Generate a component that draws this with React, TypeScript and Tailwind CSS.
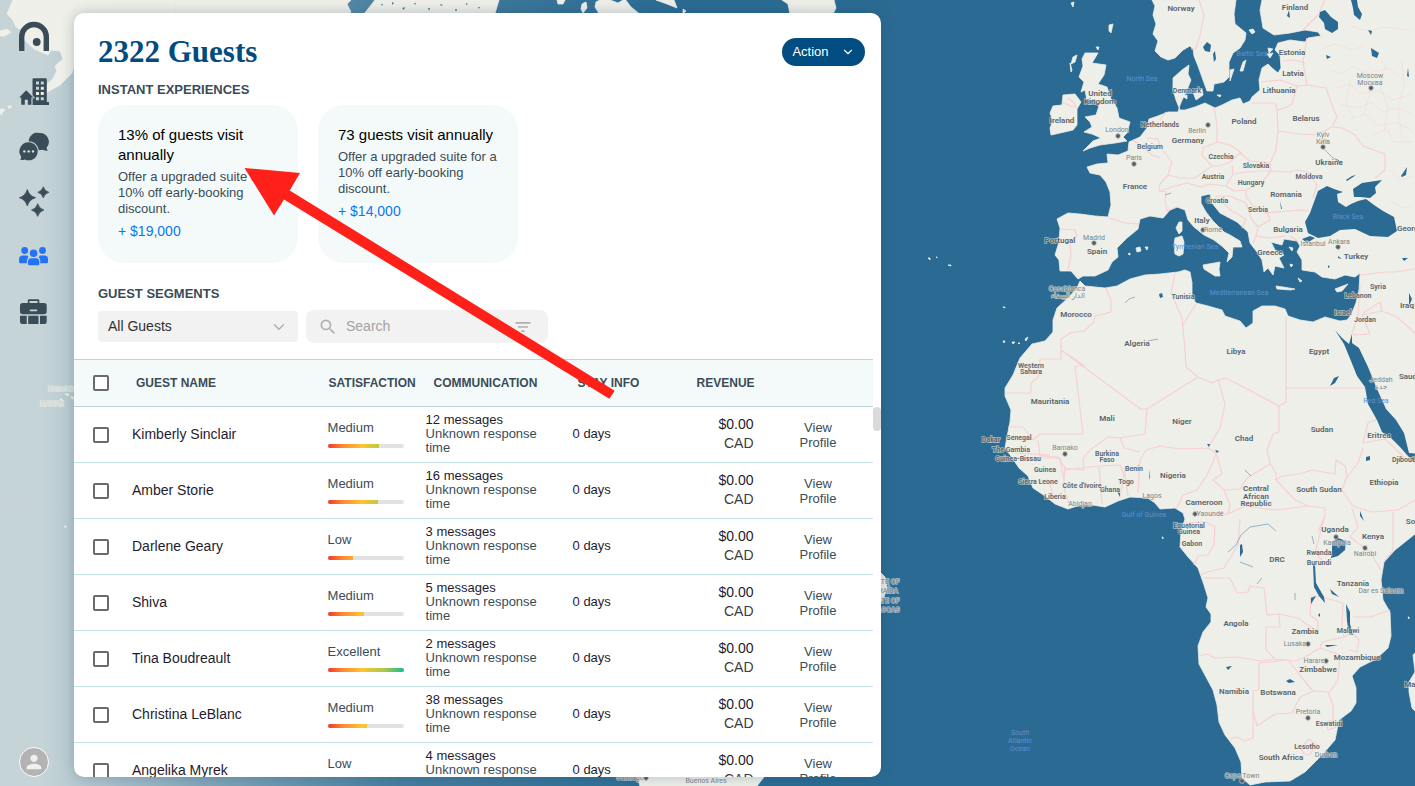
import React from "react";
import { ChevronDown } from "lucide-react";
import { MdSearch, MdFilterList, MdPerson } from "react-icons/md";

/* ---------- Map ---------- */

type Label = [string, number, number, number?];

const countries: Label[] = [
  ["Norway", 1181, 11, 8], ["Finland", 1295, 10, 8], ["Estonia", 1292, 55, 8], ["Latvia", 1293, 76, 8],
  ["Lithuania", 1279, 93, 8], ["Belarus", 1306, 121, 8], ["Poland", 1244, 124, 8], ["Germany", 1188, 143, 8],
  ["United", 1100, 96, 8], ["Kingdom", 1100, 104, 8], ["Ireland", 1062, 123, 8], ["Denmark", 1187, 93, 7],
  ["Netherlands", 1160, 127, 7], ["Belgium", 1150, 149, 7], ["Czechia", 1221, 159, 7], ["Slovakia", 1256, 168, 7],
  ["Austria", 1213, 179, 7], ["Hungary", 1251, 185, 7], ["Moldova", 1309, 179, 7], ["Ukraine", 1329, 165, 8],
  ["Romania", 1286, 197, 8], ["France", 1135, 189, 8], ["Croatia", 1217, 203, 7], ["Serbia", 1258, 212, 7],
  ["Italy", 1202, 223, 8], ["Bulgaria", 1288, 232, 8], ["Greece", 1270, 255, 8], ["Turkey", 1356, 259, 8],
  ["Portugal", 1060, 243, 8], ["Spain", 1097, 254, 8], ["Georgia", 1411, 231, 8], ["Morocco", 1076, 317, 8],
  ["Tunisia", 1183, 299, 7], ["Algeria", 1137, 346, 8], ["Libya", 1236, 354, 8], ["Egypt", 1319, 354, 8],
  ["Syria", 1378, 289, 7], ["Lebanon", 1358, 298, 7], ["Israel", 1343, 315, 7], ["Jordan", 1365, 322, 7],
  ["Iraq", 1407, 308, 8], ["Saudi", 1409, 379, 8], ["Western", 1031, 368, 7], ["Sahara", 1031, 374, 7],
  ["Mauritania", 1050, 404, 8], ["Mali", 1107, 421, 8], ["Niger", 1182, 424, 8], ["Chad", 1244, 441, 8],
  ["Sudan", 1322, 432, 8], ["Eritrea", 1379, 438, 8], ["Djibouti", 1404, 462, 7], ["Senegal", 1019, 440, 7],
  ["The Gambia", 1011, 452, 7], ["Guinea-Bissau", 1018, 461, 7], ["Guinea", 1045, 472, 7],
  ["Sierra Leone", 1038, 484, 7], ["Liberia", 1055, 499, 7], ["Burkina", 1107, 456, 7], ["Faso", 1107, 462, 7],
  ["Benin", 1134, 471, 7], ["Togo", 1126, 484, 7], ["Ghana", 1110, 492, 7], ["Côte d'Ivoire", 1082, 488, 7],
  ["Nigeria", 1173, 478, 8], ["Cameroon", 1204, 505, 8], ["Central", 1256, 491, 8], ["African", 1256, 499, 8],
  ["Republic", 1256, 506, 8], ["South Sudan", 1319, 492, 8], ["Ethiopia", 1384, 485, 8], ["Equatorial", 1189, 528, 7],
  ["Guinea", 1189, 534, 7], ["Gabon", 1192, 546, 7], ["DRC", 1277, 562, 8], ["Uganda", 1335, 532, 8],
  ["Kenya", 1373, 539, 8], ["Rwanda", 1319, 555, 7], ["Burundi", 1319, 565, 7], ["Tanzania", 1353, 586, 8],
  ["Angola", 1236, 626, 8], ["Zambia", 1305, 634, 8], ["Malawi", 1348, 633, 7], ["Mozambique", 1357, 660, 8],
  ["Zimbabwe", 1318, 672, 8], ["Namibia", 1234, 694, 8], ["Botswana", 1278, 695, 8], ["Eswatini", 1329, 726, 7],
  ["Lesotho", 1307, 749, 7], ["South Africa", 1281, 760, 8], ["Ma", 1410, 687, 8], ["Som", 1414, 524, 8],
  ["Dakar", 991, 442, 7],
];

const cities: Label[] = [
  ["London", 1117, 132], ["Berlin", 1197, 133], ["Paris", 1134, 160], ["Madrid", 1094, 240], ["Rome", 1213, 232],
  ["Moscow", 1370, 78], ["Москва", 1370, 85], ["Kyiv", 1323, 137], ["Київ", 1323, 144], ["Istanbul", 1313, 246],
  ["Ankara", 1339, 244], ["Casablanca", 1067, 291], ["الدار البيضاء", 1068, 298], ["Jeddah", 1381, 382],
  ["جدة", 1381, 389], ["Bamako", 1065, 450], ["Abidjan", 1080, 506], ["Lagos", 1152, 498], ["Yaoundé", 1210, 516],
  ["Kampala", 1337, 545], ["Nairobi", 1365, 556], ["Dar es Salaam", 1381, 593], ["Lusaka", 1295, 646],
  ["Harare", 1314, 663], ["Pretoria", 1308, 714], ["Durban", 1326, 757], ["Cape Town", 1242, 778],
  ["Santiago", 630, 780], ["Buenos Aires", 706, 783], ["Honolulu", 62, 391], ["HAWAII", 52, 406],
  ["STATE OF", 884, 584], ["PARAÍBA", 884, 593], ["STATE OF", 884, 603], ["ALAGOAS", 884, 612],
];

const seas: Label[] = [
  ["North Sea", 1142, 81], ["Baltic Sea", 1252, 56], ["Black Sea", 1348, 219], ["Tyrrhenian Sea", 1195, 249],
  ["Mediterranean Sea", 1239, 295], ["Red Sea", 1376, 403], ["Gulf of Guinea", 1144, 517],
];

const dots: [number, number][] = [
  [1118, 136], [1208, 125], [1134, 164], [1094, 243], [1203, 230], [1371, 88], [1323, 147], [1338, 247],
  [1065, 454], [1195, 514], [1336, 537], [1365, 548], [1308, 644], [1326, 661], [1308, 718], [1242, 781], [646, 778],
];

const land = [
  // Scandinavia
  "M1152 0L1155 6 1153 15 1156 24 1153 34 1158 41 1155 51 1161 57 1168 60 1175 58 1183 50 1190 46 1193 49 1194 56 1198 66 1203 80 1207 91 1213 91 1214 84 1224 82 1229 77 1229 62 1233 53 1240 48 1245 40 1246 33 1240 28 1235 24 1234 14 1236 0Z",
  // Eurasia and Africa
  "M1262 0L1260 10 1263 28 1274 35 1290 33 1305 30 1318 32 1321 36 1308 38 1305 42 1290 40 1278 43 1275 50 1280 55 1281 68 1278 73 1272 68 1268 64 1262 68 1259 80 1260 90 1252 97 1250 101 1243 104 1240 98 1232 100 1222 105 1215 108 1205 103 1195 107 1185 110 1180 110 1176 100 1173 90 1173 78 1182 70 1189 65 1188 74 1191 80 1187 90 1183 98 1180 105 1178 112 1168 112 1158 116 1149 119 1147 128 1140 137 1129 142 1128 151 1118 155 1107 154 1108 163 1097 164 1087 167 1090 173 1100 175 1106 182 1110 192 1111 205 1108 217 1095 216 1080 214 1068 213 1057 219 1060 228 1059 242 1055 255 1059 260 1060 271 1071 271 1078 279 1083 276 1095 276 1108 270 1112 262 1118 257 1117 248 1127 238 1138 229 1140 219 1150 216 1163 218 1170 210 1177 207 1185 210 1188 220 1194 227 1204 235 1214 240 1223 247 1229 253 1227 262 1232 257 1233 247 1242 247 1240 241 1230 235 1224 232 1213 221 1206 212 1201 203 1201 196 1210 194 1212 203 1220 213 1237 222 1248 232 1250 243 1257 252 1262 260 1264 272 1268 268 1273 275 1275 266 1284 268 1279 258 1284 255 1275 250 1271 242 1282 245 1284 239 1297 241 1300 246 1297 252 1302 260 1302 270 1315 272 1322 277 1335 279 1345 275 1355 277 1360 273 1359 290 1356 303 1351 315 1347 320 1340 321 1325 317 1313 322 1300 320 1288 316 1285 309 1275 306 1262 306 1253 311 1253 323 1246 328 1240 321 1225 316 1222 310 1208 306 1196 303 1192 297 1192 283 1190 272 1185 270 1178 272 1160 274 1145 275 1130 279 1117 286 1105 288 1085 286 1080 281 1077 288 1068 298 1057 308 1053 320 1053 332 1045 341 1032 344 1020 358 1013 375 1005 388 1005 396 1011 410 1010 422 1007 437 1005 448 1013 459 1019 468 1028 476 1033 488 1045 496 1055 504 1068 509 1080 505 1092 505 1105 507 1118 501 1130 497 1148 498 1155 503 1160 509 1175 508 1183 513 1185 519 1181 532 1180 547 1188 557 1198 568 1204 585 1208 598 1206 607 1211 614 1211 622 1203 632 1198 646 1199 664 1213 690 1217 705 1219 722 1225 735 1235 748 1241 762 1242 778 1250 785 1265 782 1290 781 1305 772 1322 755 1335 740 1339 720 1351 711 1356 703 1356 688 1352 676 1360 667 1376 659 1388 648 1391 636 1390 612 1383 600 1381 580 1384 562 1395 550 1420 530V0Z",
  // British Isles
  "M1085 53L1098 53 1092 63 1106 65 1104 75 1098 84 1107 87 1111 99 1117 108 1119 118 1130 122 1127 133 1123 137 1127 141 1115 143 1100 145 1090 148 1083 151 1093 141 1101 138 1092 134 1084 132 1092 127 1090 122 1085 117 1096 115 1099 106 1095 99 1087 100 1085 90 1081 92 1084 82 1079 77 1083 66 1082 59Z",
  "M1063 95L1075 94 1081 102 1077 109 1077 125 1073 130 1060 133 1051 135 1050 128 1053 121 1050 113 1053 106 1062 105Z",
  "M1073 57l4-2-2 7-4 2zM1070 63l2 7-1 2zM1109 25l4-1-2 9-2-2zM1071 3l3-1-1 5zM1096 47l3 0-1 3z",
  // Islands
  "M1243 62l3-2-3 11-3 0zM1230 70l4-1-4 12zM1193 92l9-3 1 6-7 5zM1182 96l5-1 0 4zM1268 48l5 1-4 4zM1267 54l6-1-3 5zM1249 30l4-1 2 3-3 2zM1217 95l4 0-1 2z",
  "M1179 222l3 0 0 9-3 3-3-6zM1175 238l7-2 2 6-1 12-4 2-4-2-1-9zM1203 265l17-3-1 7 1 7-5 0-11-7zM1136 248l4-1 1 4-4 1zM1145 247l3 0-1 3zM1128 254l2-1 0 2z",
  "M1276 286l7 1 12 2-4 1-14-1zM1335 289l13-5-6 7-5 1zM1298 278l4 3-2 1zM1289 247l4 1-1 3zM1290 264l3 1-2 2z",
  "M1003 341l2 0-1 2zM1012 342l3 0-2 2zM1018 343l2 0-1 1zM1025 339l3-2-2 4zM1003 307l2 0 0 1zM928 258l2 0 0 2zM936 257l1 0 0 1zM948 265l3 0 0 1zM1162 537l1 0 0 2z",
  "M1420 648L1413 655 1415 672 1409 682 1409 692 1412 708 1420 716Z",
  // South America
  "M881 573L885 577 887 588 884 597 881 602ZM636 772L640 786 757 786 768 772Z",
  // North America and Greenland
  "M13 0L7 14 13 20 16 27 22 30 19 35 34 49 48 55 51 50 60 51 63 59 55 66 57 71 52 80 37 92 22 101 20 104 42 95 60 85 72 73 76 60 230 60 345 16 351 12 347 4 351 0ZM0 31l7-2 4 3-6 4-5 0zM0 109l5 0-4 6zM8 106l4 0-3 3z",
  "M375 0L364 14 361 30 490 30 499 0ZM557 0l8 0-2 4-5 0zM582 4l4-2 1 6-4 5-2-4zM596 2l4-2 10 0 8 3 7-4 6 8 10 8H600l-5-8zM656 0h18l3 8-10-4zM683 9l3 2-3 3zM782 0l6 4 2 10h43l3-6-2-8z",
  "M60 399l2 0 0 2zM65 394l4 0-1 2zM71 396l3 2-2 1zM64 526l2 0 0 2zM1408 617l1 0 0 2z",
];

const water = [
  // Black Sea, Sea of Azov
  "M1318 191L1327 186 1334 189 1343 192 1337 194 1338 202 1346 207 1351 204 1358 201 1366 199 1374 205 1383 211 1394 217 1397 231 1388 237 1370 236 1355 229 1340 230 1330 236 1318 238 1308 233 1305 222 1310 213Z",
  "M1353 189L1362 183 1382 180 1375 187 1376 193 1370 198 1360 197 1354 197Z",
  "M1302 239l8-3 5 2-8 5z",
  // Red Sea
  "M1335 330L1344 344 1351 361 1357 376 1365 387 1368 404 1377 420 1382 432 1392 439 1400 447 1408 456 1420 468V454L1409 453 1404 433 1396 420 1386 409 1377 389 1368 367 1359 348 1352 343 1352 334 1349 344 1342 338Z",
  // Lakes
  "M1320 12l5-2 6 7 7 5 0 7-6 4-7-4-1-6-5-6zM1351 0l6 0 1 7 4 7-2 6-6-5-1-7zM1371 48l8 5-2 5-5-2zM1203 47l4-5 4 3-1 7-5-1zM1213 54l2-3 1 8-2 3zM1326 55l5 2-4 2zM1368 30l4 1-1 4zM1289 10l1 8-3-2zM1408 68l1 9-2-1zM1401 176l6-9-1 8-4 2z",
  "M1332 542l6-4 8 3-1 9-7 6-7 2 1-8zM1313 565l2 0 1 18 8 14 1 6-6-7-5-9zM1330 589l9 8-7-3zM1346 604l4 8 0 12 3 11-4-1-2-13zM1311 598l5-2-5 8zM1226 667l6-1-4 4zM1286 681l4-2 5 3-6 1zM1325 645l13 0-11 2zM1318 615l2-2 0 4zM1360 511l4 10-4-5zM1366 457l4-1 0 4-4 1zM1330 386l4-8 5-2-4 7-5 3zM1159 294l3-1 1 4-3 1zM1149 469l1 11-1-3zM1117 491l3 2 0 4zM1207 444l3 0-1 3zM1215 450l4 1-2 2zM1334 441l1 9zM1240 545l2-1 1 8-3 5zM1409 293l3 6-3 7z",
  "M1346 180l6-4 4-1-9 6zM1335 158l8 5-2 1zM1280 201l2 8-1 0zM1338 256l4 3-4-1zM1328 265l2 2-2 1zM1402 258l6 0-4 3z",
];

const rivers = "M1228 552L1236 545 1241 535 1250 527 1268 524 1276 531M1240 562L1253 567M1323 148L1332 157 1341 164M1165 195l6-2M1125 303l4-4 6-2M1148 341l10-2M1245 470l6 6M1262 578l-5 6M1295 593l0 7M1312 536l2 8";

const borders = [
  "M1199 0L1204 15 1200 35 1196 48 1191 49M1325 0L1318 15 1303 30M1307 38L1305 50 1303 62 1307 85 1326 88 1332 105 1337 117 1332 127 1342 128 1355 135 1363 146 1385 154 1385 170 1375 178M1283 61L1295 60 1305 63M1261 82L1280 80 1297 86 1307 85M1297 86L1292 104 1285 108 1277 110 1275 103 1252 103M1277 110L1278 131 1300 134 1318 135 1331 127M1278 131L1276 150 1270 163 1271 171 1290 172 1297 170 1308 172 1317 185 1313 198M1214 107L1217 125 1217 142 1203 148 1202 155 1212 166 1220 166 1230 162 1240 153 1250 161 1270 163M1217 142L1230 145 1242 153M1147 138L1158 139 1160 147 1172 162 1168 175 1180 178 1195 178 1212 166M1133 140L1143 147 1152 155 1160 158M1168 175L1160 184 1159 191 1166 192 1165 200 1167 211 1177 207M1160 191L1175 186 1187 183 1200 187 1210 184 1226 186 1233 174 1232 165M1233 174L1246 172 1262 171 1271 171M1226 186L1234 191 1246 190 1262 182 1271 171M1246 190L1246 196 1252 205 1265 213 1300 210 1309 211M1213 203L1217 196 1230 196 1246 203 1252 220 1258 227 1270 220 1268 213M1220 200L1232 211 1246 219 1242 228M1258 227L1256 236 1270 238 1285 236M1253 243L1256 236M1109 218L1125 223 1139 224M1060 229L1075 230 1077 236 1070 243 1071 255 1068 270M1166 112L1160 120M1298 241L1290 236",
  "M1106 288L1111 300 1111 312 1095 316 1094 322 1084 331 1070 333 1061 339 1061 359 1040 359 1038 378 1031 383 1031 393 1005 393M1061 350L1127 399 1141 409 1147 409 1198 377M1085 366L1075 366 1083 434 1040 434 1033 440 1023 427 1008 427M1085 366L1061 350M1147 409L1145 434 1120 438 1108 437 1090 450 1083 459 1084 470 1065 468 1058 457 1040 456 1038 440M1175 274L1171 293 1182 318 1185 350 1186 367 1198 377 1212 383 1218 380 1226 378 1279 406M1196 304L1186 320 1182 327M1286 317L1286 402 1279 406 1279 432 1273 434 1267 450 1270 463 1276 473 1276 480M1286 388L1365 388M1218 380L1225 404 1220 428 1208 448 1216 453 1222 474 1213 480 1224 490 1240 489 1247 478 1270 464M1208 448L1180 449 1160 446 1146 450 1140 460 1138 493M1120 438L1124 448 1140 452M1100 466L1120 465 1124 475 1120 497M1099 466L1102 504M1124 467L1128 496M1065 468L1064 480 1065 492 1070 506M1064 470L1098 466M1014 453L1050 455M1016 458L1060 458 1064 480M1030 482L1048 480 1053 494M1177 508L1183 495 1197 490 1207 475 1213 462 1216 453M1276 480L1282 476 1300 474 1312 470 1335 474 1336 460 1345 466 1347 476 1342 490 1352 505 1358 508 1372 512 1398 510 1415 500M1276 480L1295 500 1308 506 1325 508 1325 515 1318 532M1363 448L1358 463 1345 480M1363 443L1385 439 1405 458M1363 443L1368 423 1378 419M1224 490L1230 505 1228 514 1245 506 1275 510 1308 506M1352 508L1358 527 1350 537 1370 552 1381 570M1325 515L1317 545 1315 552 1322 560M1384 562L1393 550 1393 512",
  "M1183 523L1206 522 1215 527 1214 545 1208 555 1198 556 1194 565M1206 515L1228 514M1240 519L1238 545 1224 568 1207 572 1201 575M1204 578L1230 578 1237 593 1248 592 1250 586 1264 588 1267 615 1279 614 1280 627 1266 627 1266 650 1275 659 1260 661 1237 657 1215 658 1208 654 1198 656M1279 614L1298 618 1318 632 1318 621 1310 615 1311 597 1325 596M1325 598L1343 603 1342 625 1344 637 1322 642 1320 648 1305 657 1295 661 1275 659M1353 617L1370 617 1390 610M1259 663L1286 660 1289 661 1302 678 1313 691 1330 692 1338 680 1340 655 1320 648M1259 663L1259 690 1253 691 1253 738 1245 741 1236 737 1230 739M1253 711L1257 726 1275 714 1292 713 1300 697 1314 691M1328 692L1333 705 1333 720 1326 722 1328 730 1337 727M1301 748L1309 739 1316 744 1310 755 1304 754ZM1344 637L1352 633 1359 640 1357 652 1350 650M1360 285L1358 315 1352 334M1360 275L1385 272 1395 272 1415 269M1363 313L1380 302 1382 311 1397 317 1415 333M1382 311L1362 315 1370 334 1353 335M1062 103l5 1 4 3 5 0-3-5-5-4",
];

function WorldMap() {
  return (
    <svg
      className="absolute inset-0 h-full w-full"
      viewBox="0 0 1415 786"
      preserveAspectRatio="xMidYMid slice"
      role="img"
      aria-label="World map"
      fontFamily="Roboto, 'Noto Sans', sans-serif"
      textAnchor="middle"
    >
      <rect width="1415" height="786" fill="#2b6b93" />
      <g fill="#eeefe8" stroke="#eeefe8" strokeWidth="0.8" strokeLinejoin="round">
        {land.map((d, i) => <path key={i} d={d} />)}
      </g>
      <g fill="none" stroke="#f8cfd2" strokeWidth="1.2" strokeLinejoin="round">
        {borders.map((d, i) => <path key={i} d={d} />)}
        <path
          strokeWidth="0.7"
          opacity="0.6"
          d="M1320 50l15-6 18 6 12-5M1330 70l12 4 10-8 14 8 22-6 12 8M1336 88l14-4 10 10 18-4 14 10 20-6M1340 104l18 4 14-6 10 10 16-4 14 6M1350 120l16-6 12 12 18-4 18 10M1372 136l14-8 8 14 20 0M1350 84l-4 20 8 14M1366 70l4 24-6 20M1386 62l-6 24 8 22-4 24M1402 60l2 26-6 22 4 30M1390 170l10 10 14-4M1390 200l12 8 12-2M1350 25l16 6 20-4 28 4M175 0v14"
        />
      </g>
      <g fill="#2b6b93">
        {water.map((d, i) => <path key={i} d={d} />)}
        <path d="M381 4l2 0-1 2zM392 2l2 1-2 2zM402 8l3-1-1 3zM414 3l2 0-1 2zM428 8l2 0-1 3zM440 4l3 1-2 1zM455 9l2 0-1 3zM466 3l2 1-2 1zM478 7l2 0-1 2z" />
      </g>
      <path d={rivers} fill="none" stroke="#78a5bd" strokeWidth="0.8" />
      <g fill="#575b5e" stroke="#c5c8c6" strokeWidth="0.8">
        {dots.map(([x, y]) => <circle key={`${x}-${y}`} cx={x} cy={y} r="2.4" />)}
      </g>
      <g stroke="#eeefe8" strokeWidth="1.4" strokeOpacity="0.65" paintOrder="stroke">
        <g fill="#7b858a" fontSize="7">
          {cities.map(([t, x, y], i) => <text key={i} x={x} y={y}>{t}</text>)}
        </g>
        <g fill="#56636b" fontWeight="600">
          {countries.map(([t, x, y, s], i) => <text key={i} x={x} y={y} fontSize={s}>{t}</text>)}
        </g>
      </g>
      <g fill="#5b90d2" fontSize="7">
        {seas.map(([t, x, y]) => <text key={t} x={x} y={y}>{t}</text>)}
        <text x="1020" y="735">South</text>
        <text x="1020" y="743">Atlantic</text>
        <text x="1020" y="751">Ocean</text>
      </g>
    </svg>
  );
}

/* ---------- Sidebar icons ---------- */

const iconClass = "block h-[30px] w-[30px] overflow-visible";

const LogoIcon = () => (
  <svg viewBox="0 0 30 30" className={iconClass} fill="none">
    <path d="M2.7 29V14.8a12.3 12.3 0 0 1 24.6 0V29" stroke="currentColor" strokeWidth="5.4" />
    <circle cx="17.7" cy="20" r="3.9" fill="currentColor" />
  </svg>
);

const PropertiesIcon = () => (
  <svg viewBox="0 0 30 30" className={iconClass} fill="currentColor" fillRule="evenodd">
    <path d="M15 1.3h11.6a1.2 1.2 0 0 1 1.2 1.2V25H30v3H13.5V2.6A1.3 1.3 0 0 1 15 1.3ZM17 4.4v3h3v-3Zm4.8 0v3h3v-3ZM17 9.7v3h3v-3Zm4.8 0v3h3v-3ZM17 15v3h3v-3Zm4.8 0v3h3v-3ZM17 20.3v3h3v-3Zm4.8 0v3h3v-3Z" />
    <path
      d="M7.2 13.2 14.4 20.4H12.4V27.8H8.8V22.8H5.8V27.8H2.2V20.4H.2Z"
      stroke="#c3d3d6" strokeWidth="1.6" paintOrder="stroke"
    />
  </svg>
);

const MessagesIcon = () => (
  <svg viewBox="0 0 30 30" className={iconClass} fill="currentColor">
    <path d="M20.8 1a8.9 8.9 0 0 1 6.9 14.6c-.3 1 .2 2 1.2 3.1-2 .2-3.7-.2-4.9-1a9 9 0 0 1-3.2.3A8.8 8.8 0 1 1 20.8 1Z" />
    <path
      d="M9.7 10.3a9 9 0 1 1-3.9 17.1c-1.4.6-3 .7-5 .2 1.2-1 1.6-2.1 1.2-3.2A9 9 0 0 1 9.7 10.3Z"
      stroke="#c3d3d6" strokeWidth="2" paintOrder="stroke"
    />
    <g fill="#d8e2e3">
      <circle cx="5.4" cy="19.4" r="1.2" />
      <circle cx="9.7" cy="19.4" r="1.2" />
      <circle cx="14" cy="19.4" r="1.2" />
    </g>
  </svg>
);

const SparklesIcon = () => (
  <svg viewBox="0 0 30 30" className={iconClass} fill="currentColor" stroke="currentColor" strokeWidth="0.8" strokeLinejoin="round">
    <path d="M8.3 2.5Q10.1 8.9 16.5 10.7 10.1 12.5 8.3 18.9 6.5 12.5 .4 10.7 6.500 8.9 8.3 2.5Z" />
    <path d="M24.3-.2Q25.500 4.100 29.800 5.300 25.500 6.500 24.300 10.900 23.100 6.500 18.800 5.300 23.100 4.100 24.300-.2Z" />
    <path d="M18.700 16.700Q20 21.700 24.900 23 20 24.300 18.700 29.400 17.400 24.300 12.500 23 17.400 21.700 18.700 16.700Z" />
  </svg>
);

const GuestsIcon = () => (
  <svg viewBox="0 0 30 30" className={iconClass} fill="currentColor">
    <circle cx="5.7" cy="8.5" r="3.4" />
    <circle cx="23.5" cy="8.5" r="3.4" />
    <circle cx="14.6" cy="11.2" r="3.8" />
    <path d="M3.2 13.6h5.200a6.400 6.400 0 0 0 1.200 1.700c-1.100.8-1.700 2.200-1.700 4v2H1.200q-1.200 0-1.100-1.200v-2.700a3.500 3.500 0 0 1 3.100-3.800ZM20.800 13.600h5.200a3.500 3.500 0 0 1 3 3.800v2.700q0 1.200-1.200 1.200h-6.500v-2c0-1.800-.6-3.200-1.700-4a6.400 6.400 0 0 0 1.200-1.700Z" />
    <path d="M12.300 16.200h4.800a3.500 3.500 0 0 1 3.200 3.500v2.200q0 1.300-1.400 1.300h-8.500q-1.400 0-1.400-1.300v-2.200a3.500 3.500 0 0 1 3.300-3.500Z" />
  </svg>
);

const ToolboxIcon = () => (
  <svg viewBox="0 0 30 30" className={iconClass} fill="currentColor" fillRule="evenodd">
    <path d="M8.8 6V3.6Q8.8 2.3 10.1 2.3H19Q20.3 2.3 20.3 3.6V6H25.2Q27.7 6 27.7 8.500V14.500Q27.7 17.2 25 17.2H3.7Q1 17.2 1 14.500V8.500Q1 6 3.500 6ZM10.500 6H18.600V4H10.500ZM11.500 12.500a.8.8 0 0 0 0 1.700h6a.8.8 0 0 0 0-1.700Z" />
    <path d="M1 18.800H7.700V27H3.500Q1 27 1 24.500ZM9.200 18.800H19.500V27H9.200ZM21 18.800H27.700V24.500Q27.700 27 25.200 27H21Z" />
  </svg>
);

const navItems = [
  { label: "Home", Icon: LogoIcon, active: false },
  { label: "Properties", Icon: PropertiesIcon, active: false },
  { label: "Messages", Icon: MessagesIcon, active: false },
  { label: "Insights", Icon: SparklesIcon, active: false },
  { label: "Guests", Icon: GuestsIcon, active: true },
  { label: "Toolbox", Icon: ToolboxIcon, active: false },
];

function Sidebar() {
  return (
    <nav aria-label="Main" className="flex w-[74px] shrink-0 flex-col justify-between pt-[9px] pl-[19px]">
      <div className="flex flex-col gap-[25px]">
        {navItems.map(({ label, Icon, active }) => (
          <a key={label} href="#" aria-label={label} className={active ? "w-[30px] text-[#2672f5]" : "w-[30px] text-[#3a4c57]"}>
            <Icon />
          </a>
        ))}
      </div>
      <button
        aria-label="Account"
        className="flex h-[30px] w-[30px] items-center justify-center rounded-full border border-white bg-[#b3b3b3] text-[#f0f0f0]"
      >
        <MdPerson size={22} />
      </button>
    </nav>
  );
}

/* ---------- Guests panel ---------- */

const experiences = [
  { title: "13% of guests visit annually", amount: "+ $19,000" },
  { title: "73 guests visit annually", amount: "+ $14,000" },
];

const guests = [
  { name: "Kimberly Sinclair", level: "Medium", score: 68, messages: 12 },
  { name: "Amber Storie", level: "Medium", score: 66, messages: 16 },
  { name: "Darlene Geary", level: "Low", score: 34, messages: 3 },
  { name: "Shiva", level: "Medium", score: 48, messages: 5 },
  { name: "Tina Boudreault", level: "Excellent", score: 100, messages: 2 },
  { name: "Christina LeBlanc", level: "Medium", score: 52, messages: 38 },
  { name: "Angelika Myrek", level: "Low", score: 30, messages: 4 },
];

function Checkbox({ label }: { label: string }) {
  return (
    <input
      type="checkbox"
      aria-label={label}
      className="ml-[19px] block h-4 w-4 appearance-none rounded-xs border-2 border-[#6b6b6b] bg-white"
    />
  );
}

function SatisfactionBar({ score }: { score: number }) {
  return (
    <div className="mt-2 h-1 w-[76px] overflow-hidden rounded-full bg-[#e2e2e2]">
      <div className="h-full overflow-hidden" style={{ width: `${score}%` }}>
        <div className="h-full w-[76px] bg-[linear-gradient(90deg,#f0392f_0%,#fd8b35_20%,#fdc52e_45%,#a5c84d_75%,#12bf8c_100%)]" />
      </div>
    </div>
  );
}

function GuestTable() {
  const th = "h-12 border-y border-[#bcd4da] p-0 text-left font-bold whitespace-nowrap";
  const cell = "h-14 border-b border-[#c7e4ec] p-0";
  const td = `${cell} pb-[2px] pl-[10px]`;
  return (
    <div className="flex min-h-0 flex-1 overflow-hidden">
      <div className="min-w-0 flex-1">
        <table className="w-full table-fixed border-separate border-spacing-0 text-[13px] leading-[14px] text-[#1f1c2e]">
          <colgroup>
            <col className="w-12" />
            <col />
            <col className="w-[98px]" />
            <col className="w-[147px]" />
            <col className="w-[109px]" />
            <col className="w-[92px]" />
            <col className="w-[109px]" />
          </colgroup>
          <thead className="bg-[#f4fafa] text-[12px] text-[#3a4c57]">
            <tr>
              <th className={th}><Checkbox label="Select all guests" /></th>
              <th className={`${th} pl-[14px]`}>GUEST NAME</th>
              <th className={`${th} pl-[11px]`}>SATISFACTION</th>
              <th className={`${th} pl-[18px]`}>COMMUNICATION</th>
              <th className={`${th} pl-[15px]`}>STAY INFO</th>
              <th className={`${th} pl-[25px]`}>REVENUE</th>
              <th className={th} aria-label="Profile" />
            </tr>
          </thead>
          <tbody>
            {guests.map((g) => (
              <tr key={g.name}>
                <td className={cell}><Checkbox label={`Select ${g.name}`} /></td>
                <td className={`${td} text-[14px]`}>{g.name}</td>
                <td className={td}>
                  <div className="leading-4 text-[#3a4c57]">{g.level}</div>
                  <SatisfactionBar score={g.score} />
                </td>
                <td className={`${td} pr-5`}>
                  <div>{g.messages} messages</div>
                  <div className="text-[#3a4c57]">Unknown response time</div>
                </td>
                <td className={td}>0 days</td>
                <td className={`${cell} pr-[10px] pb-[2px] text-right text-[14px] leading-[19px]`}>
                  <div>$0.00</div>
                  <div className="text-[#3c3c3c]">CAD</div>
                </td>
                <td className={`${cell} px-8 text-center leading-[15px]`}>
                  <a href="#" className="text-[#3a4c57]">View Profile</a>
                </td>
              </tr>
            ))}
          </tbody>
        </table>
      </div>
      <div className="w-2 pt-12">
        <div className="h-6 rounded-full bg-[#dadada]" />
      </div>
    </div>
  );
}

function GuestsPanel() {
  return (
    <main className="flex w-[57%] flex-col overflow-hidden rounded-[10px] bg-white shadow-[0_0_14px_rgba(30,70,95,0.28)]">
      <div className="pt-[25px] pr-4 pb-4 pl-6">
        <header className="flex h-7 items-center justify-between">
          <h1 className="font-['Liberation_Serif',serif] text-[31px] leading-[26px] font-bold text-[#024b7f]">2322 Guests</h1>
          <button className="flex h-7 items-center gap-3 rounded-full bg-[#014c80] px-[10px] text-[13px] text-white">
            Action
            <ChevronDown size={14} />
          </button>
        </header>

        <h2 className="mt-4 text-[13px] leading-4 font-bold text-[#3a4c57]">INSTANT EXPERIENCES</h2>
        <div className="mt-[7px] flex gap-5">
          {experiences.map((e) => (
            <article key={e.title} className="w-[200px] rounded-[26px] bg-[#f4fafa] px-5 pt-5 pb-[22px]">
              <h3 className="text-[15px] leading-5 text-black">{e.title}</h3>
              <p className="my-1 text-[13px] leading-4 text-[#3a4c57]">
                Offer a upgraded suite for a 10% off early-booking discount.
              </p>
              <p className="text-[14px] leading-5 text-[#0a78f0]">{e.amount}</p>
            </article>
          ))}
        </div>

        <h2 className="mt-[23px] text-[13px] leading-4 font-bold text-[#3a4c57]">GUEST SEGMENTS</h2>
        <div className="mt-2 flex items-center gap-2">
          <div className="grid w-[200px] items-center">
            <select
              aria-label="Guest segment"
              className="col-start-1 row-start-1 h-[31px] w-full appearance-none rounded bg-[#f2f2f2] pr-8 pl-[10px] text-[14px] text-[#303030]"
            >
              <option>All Guests</option>
            </select>
            <ChevronDown size={18} className="pointer-events-none col-start-1 row-start-1 mr-[10px] justify-self-end text-[#b0b0b0]" />
          </div>
          <div className="flex h-[33px] w-[242px] items-center rounded-lg bg-[#f2f2f2] pr-[15px] pl-3 text-[#b0b0b0]">
            <MdSearch size={20} className="shrink-0" />
            <input
              type="search"
              aria-label="Search guests"
              placeholder="Search"
              className="ml-2 min-w-0 flex-1 bg-transparent text-[14px] text-[#303030] outline-none placeholder:text-[#a3a3a3]"
            />
            <button aria-label="Filter" className="shrink-0">
              <MdFilterList size={20} />
            </button>
          </div>
        </div>
      </div>
      <GuestTable />
    </main>
  );
}

export default function App() {
  return (
    <div className="relative flex h-screen overflow-hidden bg-[#2b6b93] pt-[13px] pb-[9px] font-['Liberation_Sans',Arial,sans-serif]">
      <WorldMap />
      <div className="absolute inset-0 bg-[linear-gradient(90deg,rgba(239,240,233,0.79)_40px,rgba(239,240,233,0.45)_200px,rgba(239,240,233,0.14)_400px,rgba(239,240,233,0)_680px)]" />
      <div className="relative flex min-w-0 flex-1">
        <Sidebar />
        <GuestsPanel />
      </div>
      <svg
        className="pointer-events-none absolute top-[160px] left-[240px] h-[245px] w-[380px]"
        viewBox="240 160 380 245"
        fill="#ff2019"
        aria-hidden="true"
      >
        <path d="M244.5 168L300 173 289.7 190.5 614.7 390.7 609.3 398.7 284 199.5 274 215.5Z" />
      </svg>
    </div>
  );
}
